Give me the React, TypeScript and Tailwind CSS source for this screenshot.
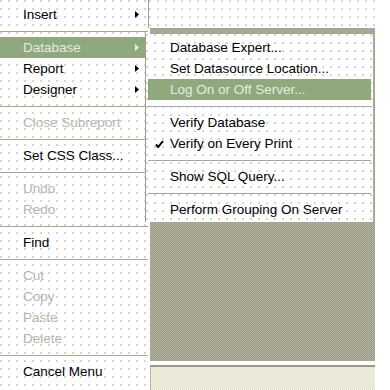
import React from "react";

const dots =
  "bg-white bg-[radial-gradient(circle_at_1px_1px,#d2d2d2_0.7px,transparent_0.8px)] bg-[length:8px_8px]";

type Item = {
  label?: string;
  sep?: boolean;
  arrow?: boolean;
  disabled?: boolean;
  active?: boolean;
  check?: boolean;
};

const leftItems: Item[] = [
  { label: "Insert", arrow: true },
  { sep: true },
  { label: "Database", arrow: true, active: true },
  { label: "Report", arrow: true },
  { label: "Designer", arrow: true },
  { sep: true },
  { label: "Close Subreport", disabled: true },
  { sep: true },
  { label: "Set CSS Class..." },
  { sep: true },
  { label: "Undo", disabled: true },
  { label: "Redo", disabled: true },
  { sep: true },
  { label: "Find" },
  { sep: true },
  { label: "Cut", disabled: true },
  { label: "Copy", disabled: true },
  { label: "Paste", disabled: true },
  { label: "Delete", disabled: true },
  { sep: true },
  { label: "Cancel Menu" },
];

const subItems: Item[] = [
  { label: "Database Expert..." },
  { label: "Set Datasource Location..." },
  { label: "Log On or Off Server...", active: true },
  { sep: true },
  { label: "Verify Database" },
  { label: "Verify on Every Print", check: true },
  { sep: true },
  { label: "Show SQL Query..." },
  { sep: true },
  { label: "Perform Grouping On Server" },
];

function Arrow({ light }: { light?: boolean }) {
  return (
    <svg width="4" height="7" viewBox="0 0 4 7" className="shrink-0">
      <path d="M0 0 L4 3.5 L0 7 Z" fill={light ? "#e8ece4" : "#000"} />
    </svg>
  );
}

function Check() {
  return (
    <svg width="9" height="8" viewBox="0 0 9 8" className="absolute left-[7px] top-[7px]">
      <path d="M1 4.5 L3.2 7 L8 1" stroke="#000" strokeWidth="2" fill="none" />
    </svg>
  );
}

function textColor(it: Item) {
  if (it.active) return "text-[#e6ebe2]";
  if (it.disabled) return "text-[#b6b6a6]";
  return "text-black";
}

export default function App() {
  return (
    <div
      className="w-[390px] h-[390px] bg-white relative overflow-hidden text-[13.5px] leading-none"
      style={{ fontFamily: '"Liberation Sans", Arial, sans-serif' }}
    >
      <div className="flex w-[375px] h-[390px]">
        {/* left main menu */}
        <div className={`w-[148px] ${dots} flex flex-col pt-[4px]`}>
          {leftItems.map((it, i) =>
            it.sep ? (
              <div key={i} className="h-[12px] flex items-center">
                <div className="h-px w-full bg-[#aaa680]" />
              </div>
            ) : (
              <div
                key={i}
                className={`h-[21px] w-[145px] flex items-center pl-[23px] pr-[6px] ${
                  it.active ? "bg-[#8fa97c]" : ""
                } ${textColor(it)}`}
              >
                <span className="flex-1">{it.label}</span>
                {it.arrow && <Arrow light={it.active} />}
              </div>
            )
          )}
        </div>

        {/* right background area */}
        <div className="flex-1 flex flex-col">
          <div className={`h-[28px] ${dots} border-l border-[#a29e84]`} />
          <div className="h-[333px] ml-[2px] bg-[#a7a693] bg-[repeating-conic-gradient(#9b9b8f_0_25%,#b5b299_0_50%)] bg-[length:2px_2px]" />
          <div className="h-[4px] bg-white" />
          <div className="h-[2px] ml-[2px] bg-[#9c9a88]" />
          <div className="flex-1 ml-[2px] border-l border-[#b8b49c] bg-[#ecead9] bg-[repeating-conic-gradient(#e2e0cf_0_25%,#f6f3e2_0_50%)] bg-[length:2px_2px]" />
        </div>
      </div>

      {/* submenu */}
      <div
        className={`absolute left-[145px] top-[34px] w-[228px] h-[188px] ${dots} border-l border-[#a09f90] pt-[3px] flex flex-col`}
      >
        {subItems.map((it, i) =>
          it.sep ? (
            <div key={i} className="h-[12px] flex items-center px-[2px]">
              <div className="h-px w-full bg-[#a6a69c]" />
            </div>
          ) : (
            <div
              key={i}
              className={`relative h-[21px] mx-[2px] flex items-center pl-[22px] ${
                it.active ? "bg-[#8fa97c]" : ""
              } ${textColor(it)}`}
            >
              {it.check && <Check />}
              <span>{it.label}</span>
            </div>
          )
        )}
      </div>
    </div>
  );
}
